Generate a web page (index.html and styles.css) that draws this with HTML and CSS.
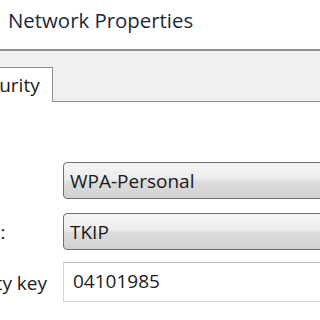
FILE: index.html
```html
<!DOCTYPE html>
<html>
<head>
<meta charset="utf-8">
<link rel="stylesheet" href="styles.css">
</head>
<body>
<div class="page">
  <div class="title">Network Properties</div>
  <div class="tabbar">
    <div class="tab">Security</div>
  </div>
  <div class="panel">
    <div class="form">
      <div class="label">Security type:</div>
      <div class="select sel1">WPA-Personal</div>
      <div class="label">Encryption type:</div>
      <div class="select sel2">TKIP</div>
      <div class="label">Network security key</div>
      <div class="input">04101985</div>
    </div>
  </div>
</div>
</body>
</html>
```
FILE: styles.css
```css
html, body {
  margin: 0;
  padding: 0;
  background: #ffffff;
}
.page {
  width: 320px;
  height: 320px;
  overflow: hidden;
  font-family: "Open Sans", "Noto Sans", sans-serif;
  font-size: 19px;
  color: #1a1a1a;
}
.title {
  height: 51px;
  box-sizing: border-box;
  padding: 6px 0 0 8px;
  font-size: 20.4px;
  color: #1c2838;
  border-bottom: 2px solid #8e8e8e;
}
.tabbar {
  height: 50px;
  background: #f0f0f0;
  display: flex;
  align-items: flex-end;
  border-bottom: 1px solid #8e8e8e;
}
.tab {
  height: 35px;
  box-sizing: border-box;
  margin-left: -40px;
  margin-bottom: -1px;
  padding: 4px 12px 0 8px;
  background: #ffffff;
  border: 1px solid #8e8e8e;
  border-bottom: none;
  white-space: nowrap;
}
.panel {
  padding-top: 60px;
}
.form {
  display: grid;
  grid-template-columns: 201px 400px;
  row-gap: 14px;
  margin-left: -138px;
  align-items: center;
}
.label {
  white-space: nowrap;
}
.select {
  height: 37px;
  box-sizing: border-box;
  border: 1px solid #6e6e6e;
  border-radius: 4px;
  background: linear-gradient(#f5f5f5 0%, #ececec 45%, #dcdcdc 55%, #d2d2d2 100%);
  padding: 5px 0 0 6px;
  line-height: 27px;
}
.input {
  height: 40px;
  box-sizing: border-box;
  border: 1px solid #d4d4d4;
  border-top-color: #bdbdbd;
  background: #ffffff;
  padding: 5px 0 0 9px;
  line-height: 27px;
  margin-top: -2px;
}
```
